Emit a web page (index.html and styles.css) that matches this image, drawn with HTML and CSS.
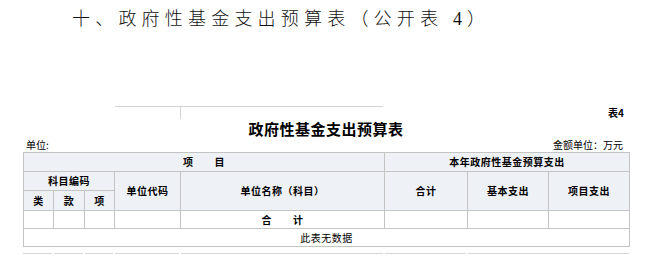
FILE: index.html
```html
<!DOCTYPE html>
<html lang="zh-CN">
<head>
<meta charset="utf-8">
<title>政府性基金支出预算表</title>
<link rel="stylesheet" href="styles.css">
</head>
<body>
<h1 class="page-title">十、政府性基金支出预算表（公开表 4）</h1>
<div class="sheet">
  <div class="top-row">
    <div class="fragment"><div class="tick"></div></div>
    <div class="tbl-no">表4</div>
  </div>
  <div class="tbl-title">政府性基金支出预算表</div>
  <div class="unit-row">
    <span>单位:</span>
    <span>金额单位：万元</span>
  </div>
  <table class="grid">
    <colgroup>
      <col class="c30"><col class="c31"><col class="c30"><col class="c66"><col class="c204"><col class="c83"><col class="c81"><col class="c81">
    </colgroup>
    <tr class="r1 head">
      <td colspan="5" class="wide">项　　目</td>
      <td colspan="3">本年政府性基金预算支出</td>
    </tr>
    <tr class="r2 head">
      <td colspan="3">科目编码</td>
      <td rowspan="2">单位代码</td>
      <td rowspan="2">单位名称（科目）</td>
      <td rowspan="2">合计</td>
      <td rowspan="2">基本支出</td>
      <td rowspan="2">项目支出</td>
    </tr>
    <tr class="r3 head">
      <td>类</td>
      <td>款</td>
      <td>项</td>
    </tr>
    <tr class="r4">
      <td></td><td></td><td></td><td></td>
      <td class="bold wide">合　　计</td>
      <td></td><td></td><td></td>
    </tr>
    <tr class="r5">
      <td colspan="8" class="empty">此表无数据</td>
    </tr>
  </table>
  <div class="cut-row">
    <span></span><span></span><span></span><span></span><span></span><span></span><span></span>
  </div>
</div>
</body>
</html>
```

FILE: styles.css
```css
html, body {
  margin: 0;
  padding: 0;
  background: #ffffff;
}

body {
  font-family: "Noto Sans CJK SC", sans-serif;
  color: #000;
}

.page-title {
  margin: 0;
  padding-left: 72px;
  font-family: "Liberation Serif", "Noto Sans CJK SC", serif;
  font-weight: 300;
  font-size: 18px;
  line-height: 38px;
  letter-spacing: 5.2px;
  color: #111;
  white-space: nowrap;
}

.sheet {
  margin-top: 68px;
  padding-left: 23px;
  width: 606px;
}

.top-row {
  display: flex;
  height: 13px;
}

.fragment {
  margin-left: 92px;
  width: 268px;
  border-top: 1px solid #d4d4d4;
  height: 12px;
}

.tick {
  margin-left: 65px;
  height: 12px;
  border-left: 1px solid #d4d4d4;
}

.tbl-no {
  margin-left: auto;
  margin-right: 5px;
  font-size: 10px;
  font-weight: 700;
  line-height: 13px;
}

.tbl-title {
  margin-top: 1px;
  text-align: center;
  font-size: 15px;
  font-weight: 700;
  letter-spacing: 0.5px;
  line-height: 18px;
  height: 18px;
}

.unit-row {
  display: flex;
  justify-content: space-between;
  padding: 0 6px 0 3px;
  font-size: 10px;
  line-height: 14px;
  height: 14px;
}

.grid {
  border-collapse: collapse;
  table-layout: fixed;
  width: 607px;
  font-size: 10px;
}

.c30 { width: 30px; }
.c31 { width: 31px; }
.c66 { width: 66px; }
.c204 { width: 204px; }
.c83 { width: 83px; }
.c81 { width: 81px; }

.grid td {
  border: 1px solid #c4c4c4;
  padding: 0;
  text-align: center;
  vertical-align: middle;
  line-height: 12px;
  letter-spacing: 0.5px;
  white-space: nowrap;
  overflow: hidden;
}

.head td {
  background: #eef1f6;
  font-weight: 700;
}

.r1 td { height: 18px; }
.r2 td { height: 18px; }
.r3 td { height: 19px; }
.r4 td { height: 17px; }
.r5 td { height: 17px; }

.bold { font-weight: 700; }

.empty {
  font-weight: 400;
}

.cut-row {
  margin-top: 6px;
  display: grid;
  grid-template-columns: 29px 29px 28px 64px 202px 81px 161px;
  column-gap: 2px;
}

.cut-row span {
  border-top: 1px solid #d6d6d6;
  height: 1px;
}
```
